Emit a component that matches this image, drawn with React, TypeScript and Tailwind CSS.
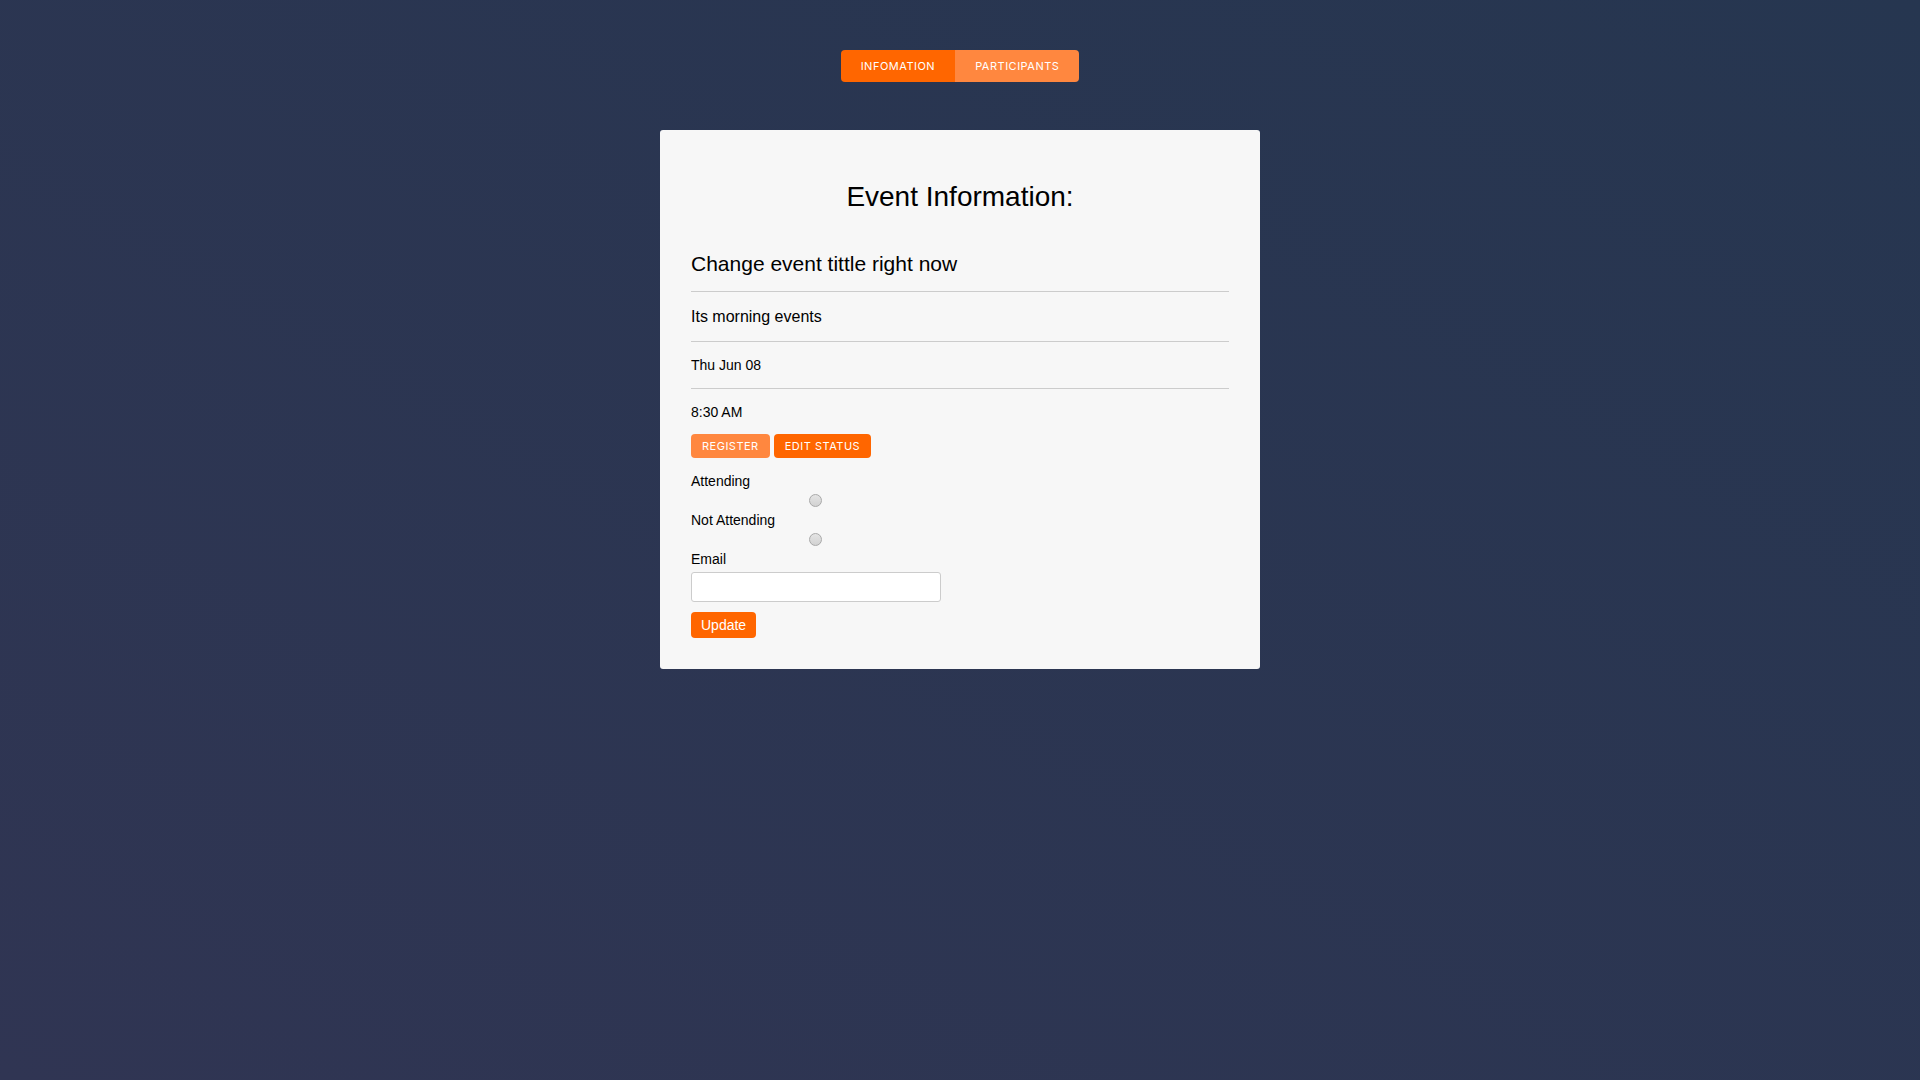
import React from "react";

const sans = "font-['Liberation_Sans',Arial,sans-serif]";
const ui = "font-['Inter','Roboto',sans-serif]";

function Radio({ name }: { name: string }) {
  return (
    <div className="flex w-[248px] justify-center pt-[4px]">
      <input
        type="radio"
        name={name}
        className="m-0 h-[13px] w-[13px] appearance-none rounded-full border border-[#a9a9a9] bg-[linear-gradient(#e4e4e4,#d2d2d2)]"
      />
    </div>
  );
}

export default function App() {
  return (
    <div
      className={`min-h-screen w-full bg-[linear-gradient(to_top_right,#303553,#263650)] flex flex-col items-center pt-[50px] ${sans}`}
    >
      <div className={`flex h-[32px] overflow-hidden rounded-[4px] text-[11px] tracking-[0.5px] text-white ${ui}`}>
        <button className="bg-[#ff6600] px-[20px]">INFOMATION</button>
        <button className="bg-[#ff873f] px-[20px]">PARTICIPANTS</button>
      </div>

      <div className="mt-[48px] w-[600px] rounded-[3px] bg-[#f7f7f7] pl-[31px] pr-[31px] pt-[51px] pb-[31px] text-black">
        <h1 className="text-center text-[28px] leading-[32px]">Event Information:</h1>

        <div className="mt-[39px] border-b border-[#cccccc] pb-[15px] text-[21px] leading-[24px]">
          Change event tittle right now
        </div>
        <div className="border-b border-[#cccccc] pt-[15px] pb-[14px] text-[16px] leading-[20px]">
          Its morning events
        </div>
        <div className="border-b border-[#cccccc] pt-[14px] pb-[14px] text-[14px] leading-[18px]">
          Thu Jun 08
        </div>
        <div className="pt-[14px] text-[14px] leading-[18px]">8:30 AM</div>

        <div className={`mt-[13px] flex gap-[4px] text-[11px] tracking-[0.5px] text-white ${ui}`}>
          <button className="h-[24px] rounded-[4px] bg-[#ff873f] px-[11px]">REGISTER</button>
          <button className="h-[24px] rounded-[4px] bg-[#ff6600] px-[11px]">EDIT STATUS</button>
        </div>

        <div className="mt-[14px] text-[14px] leading-[18px]">Attending</div>
        <Radio name="status" />
        <div className="mt-[4px] text-[14px] leading-[18px]">Not Attending</div>
        <Radio name="status" />
        <div className="mt-[4px] text-[14px] leading-[18px]">Email</div>
        <input
          type="email"
          className="mt-[4px] block h-[30px] w-[250px] rounded-[3px] border border-[#cccccc] bg-white px-2 text-[14px] outline-none"
        />
        <button className="mt-[10px] h-[26px] rounded-[4px] bg-[#ff6600] px-[10px] text-[14px] text-white">
          Update
        </button>
      </div>
    </div>
  );
}
